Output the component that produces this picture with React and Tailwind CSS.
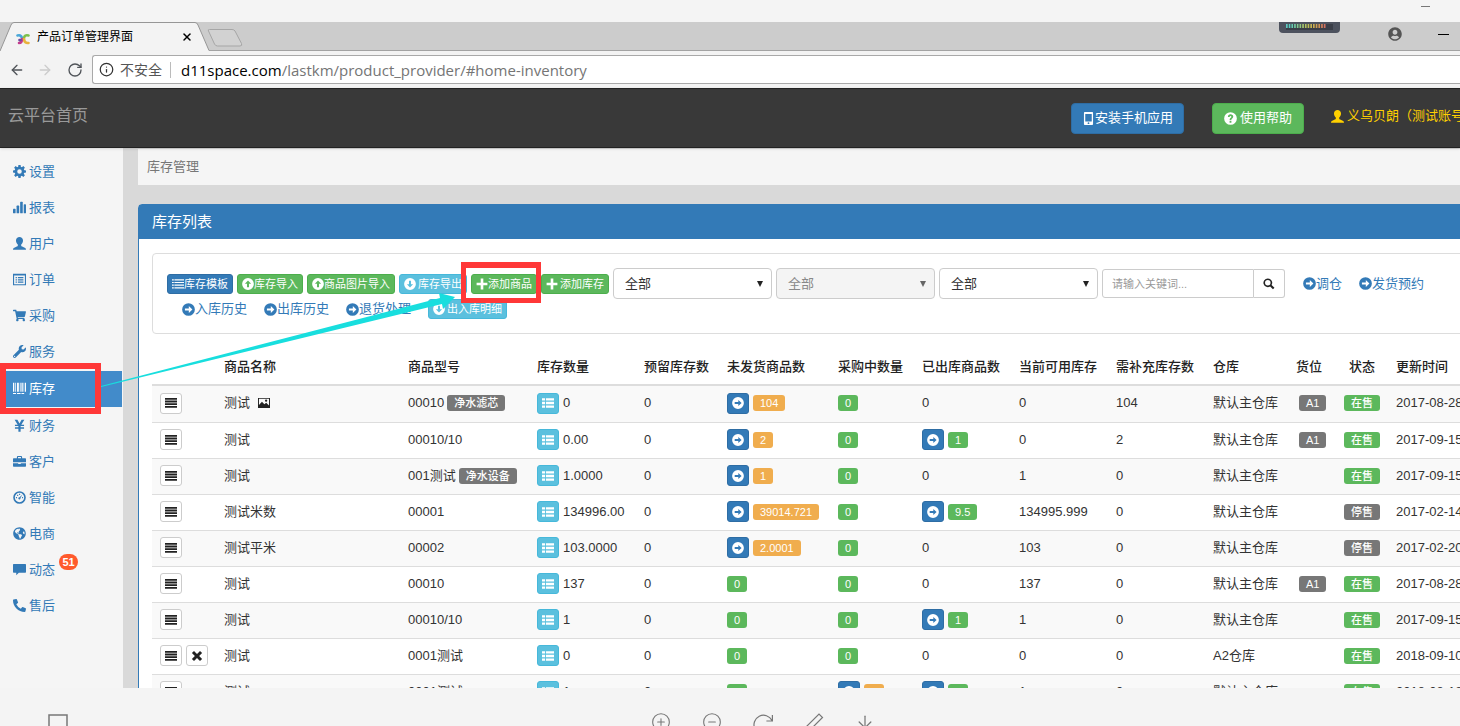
import { FaShoppingCart, FaWrench, FaGlobeAmericas, FaPhoneAlt, FaUserCircle } from "react-icons/fa";
import { ArrowLeft, ArrowRight, RotateCw, Info, X, CirclePlus, CircleMinus, ArrowDown } from "lucide-react";

function Glyph({ children, className = "size-[13px]" }) {
  return (
    <svg viewBox="0 0 20 20" fill="currentColor" aria-hidden="true" className={`shrink-0 ${className}`}>
      {children}
    </svg>
  );
}

const Cog = (p) => (
  <Glyph {...p}>
    <circle cx="10" cy="10" r="5.500" fill="none" stroke="currentColor" strokeWidth="4" />
    <path d="M8.300 0h3.400l.5 4H7.800zM8.300 20h3.400l.5-4H7.800zM0 8.300v3.400l4 .5V7.800zM20 8.300v3.400l-4 .5V7.800zM1.700 4.100l2.400-2.400 3.200 2.500-3.100 3.100zM18.300 4.100l-2.400-2.400-3.200 2.500 3.100 3.100zM1.700 15.900l2.400 2.400 3.200-2.500-3.100-3.100zM18.300 15.900l-2.400 2.400-3.200-2.500 3.100-3.100z" />
  </Glyph>
);
const Briefcase = (p) => (
  <Glyph {...p}><path fillRule="evenodd" d="M7.500 1.500h5c.9 0 1.500.6 1.500 1.500v2h5c.6 0 1 .4 1 1v5H0V6c0-.6.4-1 1-1h5V3c0-.9.6-1.500 1.500-1.500zM7.700 3.200V5h4.600V3.200zM0 12.500h8V14h4v-1.500h8V17c0 .6-.4 1-1 1H1c-.6 0-1-.4-1-1z" /></Glyph>
);
const Stats = (p) => (
  <Glyph {...p}><rect x="0" y="12" width="4" height="7" rx="1" /><rect x="5.5" y="7" width="4" height="12" rx="1" /><rect x="11" y="1" width="4" height="18" rx="1" /><rect x="16.5" y="5" width="3.5" height="14" rx="1" /></Glyph>
);
const User = (p) => (
  <Glyph {...p}><path d="M10 0C7 0 4.600 2 4.600 5.400c0 2.600 1.200 4.900 2.800 6.300v1.600c0 .8-.6 1.100-1.500 1.500L2 16.400C.7 17 0 17.600 0 19.500h20c0-1.900-.7-2.500-2-3.100l-3.900-1.600c-.9-.4-1.500-.7-1.500-1.500v-1.600c1.600-1.400 2.800-3.700 2.800-6.300C15.400 2 13 0 10 0z" /></Glyph>
);
const ListAlt = (p) => (
  <Glyph {...p}><path fillRule="evenodd" d="M0 1h20v18H0zM1.700 4v13.300h16.600V4z" /><path d="M4 6h2v2H4zM7.500 6H16v2H7.500zM4 9.500h2v2H4zM7.500 9.500H16v2H7.500zM4 13h2v2H4zM7.500 13H16v2H7.500z" /></Glyph>
);
const Barcode = (p) => (
  <Glyph {...p}><path d="M0 1h2v14H0zM3.500 1h1.200v14H3.500zM6.200 1h2.800v14H6.200zM10.500 1h1.200v14h-1.200zM13 1h2v14h-2zM16.300 1h.9v14h-.9zM18.300 1H20v14h-1.700zM0 17h4.700v1.500H0zM6.200 17h5.500v1.500H6.200zM13 17h4.200v1.500H13z" /></Glyph>
);
const Yen = (p) => (
  <Glyph {...p}><path d="M2.500 1h4.300L10 6.800 13.200 1h4.300l-4.700 7.700H17v2.200h-5.300v1.900H17V15h-5.300v4.500H8.300V15H3v-2.200h5.300v-1.900H3V8.700h4.200z" /></Glyph>
);
const Dashboard = (p) => (
  <Glyph {...p}><path fillRule="evenodd" d="M10 .3a9.700 9.700 0 1 0 0 19.400A9.700 9.700 0 0 0 10 .3zm0 2.500a7.200 7.200 0 1 1 0 14.400 7.200 7.200 0 0 1 0-14.400z" /><path d="M14.500 5.500l-3 5.300a1.700 1.700 0 1 1-1.300-1.200zM4.500 9.300h1.700V11H4.500zM6.300 5.800H8v1.700H6.300zM9.300 4.400H11V6H9.300zM13.900 9.300h1.600V11h-1.600z" /></Glyph>
);
const Comment = (p) => (
  <Glyph {...p}><path d="M1 1.500h18c.6 0 1 .4 1 1v11.500c0 .6-.4 1-1 1H9L5 19v-4H1c-.6 0-1-.4-1-1V2.500c0-.6.4-1 1-1z" /></Glyph>
);
const ThList = (p) => (
  <Glyph {...p}><path d="M0 2h5v4H0zM6.500 2H20v4H6.500zM0 8h5v4H0zM6.500 8H20v4H6.500zM0 14h5v4H0zM6.500 14H20v4H6.500z" /></Glyph>
);
const ListLines = (p) => (
  <Glyph {...p}><path d="M0 2h3v2H0zM4 2h16v2H4zM0 6.500h3v2H0zM4 6.500h16v2H4zM0 11h3v2H0zM4 11h16v2H4zM0 15.500h3v2H0zM4 15.500h16v2H4z" /></Glyph>
);
const Justify = (p) => (
  <Glyph {...p}><path d="M0 1.500h20v3H0zM0 6h20v3H0zM0 10.500h20v3H0zM0 15h20v3H0z" /></Glyph>
);
const circlePath = "M10 .2a9.800 9.800 0 1 0 0 19.600A9.800 9.800 0 0 0 10 .2z";
const CircleRight = (p) => (
  <Glyph {...p}><path fillRule="evenodd" d={`${circlePath}M10.500 4.800L16 10l-5.500 5.200v-3.500H4.500V8.300h6z`} /></Glyph>
);
const CircleUp = (p) => (
  <Glyph {...p}><path fillRule="evenodd" d={`${circlePath}M10 4l5.200 5.500h-3.500v6H8.300v-6H4.800z`} /></Glyph>
);
const CircleDown = (p) => (
  <Glyph {...p}><path fillRule="evenodd" d={`${circlePath}M10 16l5.200-5.500h-3.500v-6H8.300v6H4.800z`} /></Glyph>
);
const Plus = (p) => (
  <Glyph {...p}><path d="M7.800 1h4.400v6.800H19v4.400h-6.800V19H7.800v-6.800H1V7.800h6.800z" /></Glyph>
);
const Remove = (p) => (
  <Glyph {...p}><path d="M5 1.500l5 5 5-5L18.500 5l-5 5 5 5-3.500 3.500-5-5-5 5L1.500 15l5-5-5-5z" /></Glyph>
);
const Picture = (p) => (
  <Glyph {...p}><path fillRule="evenodd" d="M0 1.500h20v17H0zM1.600 3.100v10.400l5-5.500 4 4 3-2.500 4.800 4.500V3.100z" /><circle cx="13.500" cy="6.200" r="1.900" /></Glyph>
);
const Search = (p) => (
  <Glyph {...p}><path fillRule="evenodd" d="M8 .8a7.200 7.200 0 1 0 3.900 13.200l4.700 4.900 2.500-2.500-4.800-4.700A7.200 7.200 0 0 0 8 .8zm0 2.600a4.600 4.600 0 1 1 0 9.200 4.600 4.600 0 0 1 0-9.200z" /></Glyph>
);
const Phone = (p) => (
  <Glyph {...p}><path fillRule="evenodd" d="M4.500 0h11C16.300 0 17 .7 17 1.500v17c0 .8-.7 1.500-1.500 1.500h-11c-.8 0-1.500-.7-1.500-1.500v-17C3 .7 3.700 0 4.500 0zM5 3v11.500h10V3zm5 12.800a1.400 1.400 0 1 0 0 2.800 1.400 1.400 0 0 0 0-2.800z" /></Glyph>
);
const Question = (p) => (
  <Glyph {...p}><path fillRule="evenodd" d={`${circlePath}M8.600 14h2.800v2.500H8.600zM6 7.500C6 5 7.600 3.500 10.100 3.500c2.400 0 4.100 1.400 4.100 3.500 0 1.700-.9 2.500-1.900 3.200-.7.500-.9.800-.9 1.900v.5H8.700V12c0-1.700.8-2.400 1.700-3.100.7-.5.900-.9.900-1.600 0-.8-.5-1.300-1.300-1.300s-1.300.5-1.300 1.500z`} /></Glyph>
);

const menu = [
  ["设置", Cog],
  ["报表", Stats],
  ["用户", User],
  ["订单", ListAlt],
  ["采购", FaShoppingCart],
  ["服务", FaWrench],
  ["库存", Barcode],
  ["财务", Yen],
  ["客户", Briefcase],
  ["智能", Dashboard],
  ["电商", FaGlobeAmericas],
  ["动态", Comment],
  ["售后", FaPhoneAlt],
];

const headers = ["", "商品名称", "商品型号", "库存数量", "预留库存数", "未发货商品数", "采购中数量", "已出库商品数", "当前可用库存", "需补充库存数", "仓库", "货位", "状态", "更新时间"];

const rows = [
  { name: "测试", pic: true, model: "00010", tag: "净水滤芯", qty: "0", pend: "104", out: null, avail: "0", need: "104", slot: true, on: true, date: "2017-08-28" },
  { name: "测试", model: "00010/10", qty: "0.00", pend: "2", out: "1", avail: "0", need: "2", slot: true, on: true, date: "2017-09-15" },
  { name: "测试", model: "001测试", tag: "净水设备", qty: "1.0000", pend: "1", out: null, avail: "1", need: "0", on: true, date: "2017-09-15" },
  { name: "测试米数", model: "00001", qty: "134996.00", pend: "39014.721", out: "9.5", avail: "134995.999", need: "0", on: false, date: "2017-02-14" },
  { name: "测试平米", model: "00002", qty: "103.0000", pend: "2.0001", out: null, avail: "103", need: "0", on: false, date: "2017-02-20" },
  { name: "测试", model: "00010", qty: "137", pend: null, out: null, avail: "137", need: "0", slot: true, on: true, date: "2017-08-28" },
  { name: "测试", model: "00010/10", qty: "1", pend: null, out: "1", avail: "1", need: "0", on: true, date: "2017-09-15" },
  { name: "测试", del: true, model: "0001测试", qty: "0", pend: null, out: null, avail: "0", need: "0", wh: "A2仓库", on: true, date: "2018-09-10" },
  { name: "测试", model: "0001测试", qty: "1", pend: null, buying: "1", out: "0", avail: "1", need: "0", on: true, date: "2018-08-18" },
];

const tones = {
  green: "bg-[#5cb85c]",
  orange: "bg-[#f0ad4e]",
  gray: "bg-[#777]",
};

function Badge({ tone, children, className = "" }) {
  return (
    <span className={`inline-flex h-4 items-center rounded-[3px] px-[7px] text-[11px] leading-4 font-medium text-white ${tones[tone]} ${className}`}>
      {children}
    </span>
  );
}

const squares = {
  plain: "border-[#ccc] bg-white text-[#222]",
  blue: "border-[#2e6da4] bg-[#337ab7] text-white",
  cyan: "border-[#46b8da] bg-[#5bc0de] text-white",
};

function SquareButton({ tone, label, children }) {
  return (
    <button type="button" aria-label={label} className={`flex h-[21px] w-[22px] shrink-0 items-center justify-center rounded-[3px] border ${squares[tone]}`}>
      {children}
    </button>
  );
}

function Linked({ value, tone }) {
  return (
    <div className="flex items-center gap-1">
      <SquareButton tone="blue" label="查看"><CircleRight className="size-3" /></SquareButton>
      <Badge tone={tone}>{value}</Badge>
    </div>
  );
}

const fills = {
  blue: "border-[#2e6da4] bg-[#337ab7]",
  green: "border-[#4cae4c] bg-[#5cb85c]",
  cyan: "border-[#46b8da] bg-[#5bc0de]",
};

function ToolButton({ tone, icon: Icon, spaced, children }) {
  return (
    <button type="button" className={`flex h-5 shrink-0 items-center rounded-[3px] border px-1 text-[11px] whitespace-nowrap text-white ${fills[tone]} ${spaced ? "gap-[2px]" : ""}`}>
      <Icon className="size-3" />
      {children}
    </button>
  );
}

function ToolLink({ children }) {
  return (
    <a href="#home-inventory" className="flex shrink-0 items-center whitespace-nowrap text-[#337ab7]">
      <CircleRight />
      {children}
    </a>
  );
}

function Picker({ label, disabled }) {
  return (
    <div className="relative w-[159px] shrink-0">
      <select aria-label={label} disabled={disabled} className="block h-[31px] w-full appearance-none rounded-[4px] border border-[#ccc] bg-white px-[11px] text-[13px] text-[#333] disabled:bg-[#f4f4f4] disabled:text-[#888] disabled:opacity-100">
        <option>全部</option>
      </select>
      <span className={`pointer-events-none absolute top-[13px] right-[9px] border-x-[3px] border-t-[6px] border-x-transparent ${disabled ? "border-t-[#666]" : "border-t-[#222]"}`} />
    </div>
  );
}

const meter = ["#5fc9c0", "#5fc9c0", "#66c9b0", "#70c8a0", "#80c890", "#90c480", "#a4c470", "#b0c060", "#bcbc58", "#c4b454", "#c8ac54", "#cca054", "#d09458", "#d0805c", "#d07060"];

function BrowserChrome() {
  return (
    <>
      <div className="relative flex h-[29px] shrink-0 bg-[#ccc]">
        <svg className="absolute inset-0 h-full w-full" aria-hidden="true">
          <path d="M0 28.500H2000" stroke="#a3a3a3" fill="none" />
          <path d="M0 29L11 3Q12 .5 14 .5H195Q197 .5 198 3L209 28.500V30H0z" fill="#f3f3f3" />
          <path d="M0 29L11 3Q12 .5 14 .5H195Q197 .5 198 3L209 28.500" fill="none" stroke="#969696" />
          <path d="M208.500 9Q207.500 7.500 209.500 7.500H232Q234 7.500 235 9L241.500 21.500Q242.500 24 240 24H217.500Q215.500 24 214.500 22z" fill="#d2d2d2" stroke="#a6a6a6" />
        </svg>
        <div className="relative flex w-[199px] items-center pl-4 text-xs text-black">
          <svg viewBox="0 0 14 12" className="mt-1 h-3 w-[14px]" fill="none" strokeWidth="2.600" strokeLinecap="round" aria-hidden="true">
            <path d="M1.500 2.500Q5 1.500 6 5" stroke="#4aa7d8" /><path d="M6 6Q6 10 3 10" stroke="#c23c8c" />
            <path d="M12.500 2.500Q8.500 1.500 8 5" stroke="#7cc04b" /><path d="M8 6Q8.500 10.500 12.500 10" stroke="#e8b23c" /><path d="M3.500 7h1" stroke="#6a4aa0" />
          </svg>
          <span className="ml-[7px] whitespace-nowrap">产品订单管理界面</span>
          <button type="button" aria-label="关闭标签页" className="ml-auto"><X className="mr-1.5 size-3" strokeWidth={3} /></button>
        </div>
        <div className="relative ml-auto flex items-start pr-[11px]">
          <svg viewBox="0 0 61 11" className="mr-12 h-[11px] w-[61px]" aria-hidden="true">
            <path d="M0 0H61V7Q61 11 57 11H4Q0 11 0 7z" fill="#4d525e" />
            <path d="M7 2H54V8H7z" fill="#3a3e48" />
            {meter.map((color, i) => (
              <rect key={i} x={7 + i * 2.7} y="2" width="1.700" height="4" fill={color} />
            ))}
          </svg>
          <FaUserCircle className="mt-[5px] size-[14px] text-[#555]" />
          <span className="mt-3 ml-9 h-px w-[11px] bg-black" />
        </div>
      </div>
      <div className="flex h-[37px] shrink-0 items-center bg-[#f3f3f3] pl-[9px] text-[#505459]">
        <button type="button" aria-label="后退"><ArrowLeft className="size-4" /></button>
        <button type="button" aria-label="前进" className="ml-3 text-[#ccc]"><ArrowRight className="size-4" /></button>
        <button type="button" aria-label="刷新" className="ml-[14px]"><RotateCw className="size-4" /></button>
        <div className="ml-[9px] flex h-[29px] flex-1 items-center rounded-l-[3px] border border-r-0 border-[#a9a9a9] bg-white pl-1.5">
          <Info className="size-[15px] text-[#333]" />
          <span className="ml-1.5 text-sm text-[#555]">不安全</span>
          <span className="ml-2 h-4 w-px bg-[#bbb]" />
          <span className="ml-[10px] font-['Open_Sans'] text-[15px] leading-5 text-[#757575]"><span className="text-black">d11space.com</span>/lastkm/product_provider/#home-inventory</span>
        </div>
      </div>
    </>
  );
}

function Sidebar() {
  return (
    <nav className="w-[123px] shrink-0 bg-[#f5f5f5] pt-1.5">
      <ul>
        {menu.map(([label, Icon]) => {
          const active = label === "库存";
          return (
            <li key={label} className={active ? "relative my-px" : ""}>
              <a href="#home-inventory" className={`mr-px flex h-9 items-center pl-[13px] ${active ? "bg-[#428bca] text-white" : "text-[#337ab7]"}`}>
                <Icon className="mb-[2px] size-[13px] shrink-0" />
                <span className="ml-[3px]">{label}</span>
                {label === "动态" && <span className="mb-4 ml-1 flex h-4 w-[19px] items-center justify-center rounded-full bg-[#ff5a2c] text-[11px] font-bold text-white">51</span>}
              </a>
              {active && <span className="absolute -top-2 left-0 h-[51px] w-[101px] border-[6px] border-[#ff3838]" />}
            </li>
          );
        })}
      </ul>
    </nav>
  );
}

function Filters() {
  return (
    <div className="rounded-[4px] border border-[#ddd] p-[14px]">
      <div className="flex items-center gap-1">
        <ToolButton tone="blue" icon={ListLines}>库存模板</ToolButton>
        <ToolButton tone="green" icon={CircleUp}>库存导入</ToolButton>
        <ToolButton tone="green" icon={CircleUp}>商品图片导入</ToolButton>
        <ToolButton tone="cyan" icon={CircleDown} spaced>库存导出</ToolButton>
        <div className="relative">
          <ToolButton tone="green" icon={Plus}>添加商品</ToolButton>
          <span className="absolute -top-3 -left-[10px] z-20 h-[41px] w-20 border-[5px] border-t-[6px] border-[#ff3838]" />
        </div>
        <ToolButton tone="green" icon={Plus} spaced>添加库存</ToolButton>
        <Picker label="仓库" />
        <Picker label="货位" disabled />
        <Picker label="状态" />
        <div className="flex h-[29px] shrink-0">
          <input type="text" aria-label="关键词" placeholder="请输入关键词..." className="w-[152px] rounded-l-[3px] border border-[#ccc] px-[9px] text-[11px] placeholder:text-[#999]" />
          <button type="button" aria-label="搜索" className="flex w-[31px] items-center justify-center rounded-r-[3px] border border-l-0 border-[#ccc] text-[#222]"><Search className="size-3" /></button>
        </div>
        <div className="ml-[14px] flex gap-[17px]">
          <ToolLink>调仓</ToolLink>
          <ToolLink>发货预约</ToolLink>
        </div>
      </div>
      <div className="flex h-5 items-center gap-[17px] pl-[15px]">
        <ToolLink>入库历史</ToolLink>
        <ToolLink>出库历史</ToolLink>
        <ToolLink>退货处理</ToolLink>
        <ToolButton tone="cyan" icon={CircleDown} spaced>出入库明细</ToolButton>
      </div>
    </div>
  );
}

function Inventory() {
  return (
    <table className="mt-4 w-full table-fixed border-separate border-spacing-0 text-left whitespace-nowrap">
      <colgroup>
        <col className="w-16" /><col className="w-[184px]" /><col className="w-[129px]" /><col className="w-[107px]" /><col className="w-[83px]" />
        <col className="w-[111px]" /><col className="w-[84px]" /><col className="w-[97px]" /><col className="w-[97px]" /><col className="w-[97px]" />
        <col className="w-[83px]" /><col className="w-12" /><col className="w-[52px]" /><col />
      </colgroup>
      <thead>
        <tr>
          {headers.map((h, i) => (
            <th key={i} scope="col" className={`h-9 border-b-2 border-[#ddd] font-medium text-[#222] ${h === "状态" ? "text-center" : "pl-2"}`}>{h}</th>
          ))}
        </tr>
      </thead>
      <tbody className="[&_td]:h-9 [&_td]:border-t [&_td]:border-[#ddd] [&_td]:p-0 [&_td]:pb-[2px] [&_td]:pl-2 [&_tr:first-child_td]:border-t-0 [&_tr:nth-child(odd)]:bg-[#f9f9f9]">
        {rows.map((r, i) => (
          <tr key={i}>
            <td>
              <div className="flex gap-1">
                <SquareButton tone="plain" label="详情"><Justify className="size-3" /></SquareButton>
                {r.del && <SquareButton tone="plain" label="删除"><Remove className="size-3" /></SquareButton>}
              </div>
            </td>
            <td><div className="flex items-center gap-2">{r.name}{r.pic && <Picture className="size-3 text-[#222]" />}</div></td>
            <td><div className="flex items-center gap-[3px]">{r.model}{r.tag && <Badge tone="gray">{r.tag}</Badge>}</div></td>
            <td>
              <div className="flex items-center gap-1">
                <SquareButton tone="cyan" label="库存明细"><ThList className="size-3" /></SquareButton>
                {r.qty}
              </div>
            </td>
            <td>0</td>
            <td>{r.pend ? <Linked value={r.pend} tone="orange" /> : <Badge tone="green">0</Badge>}</td>
            <td>{r.buying ? <Linked value={r.buying} tone="orange" /> : <Badge tone="green">0</Badge>}</td>
            <td>{r.out ? <Linked value={r.out} tone="green" /> : "0"}</td>
            <td>{r.avail}</td>
            <td>{r.need}</td>
            <td>{r.wh || "默认主仓库"}</td>
            <td>{r.slot && <Badge tone="gray" className="ml-[3px]">A1</Badge>}</td>
            <td><Badge tone={r.on ? "green" : "gray"}>{r.on ? "在售" : "停售"}</Badge></td>
            <td>{r.date}</td>
          </tr>
        ))}
      </tbody>
    </table>
  );
}

export default function App() {
  return (
    <div className="relative flex h-screen flex-col overflow-hidden bg-[#f4f4f4] font-['Liberation_Sans','Noto_Sans_CJK_SC',sans-serif] text-[13px] leading-5 text-[#333]">
      <div className="flex h-[22px] shrink-0 justify-end pt-1.5 pr-[30px]">
        <span className="h-px w-[9px] bg-[#777]" />
      </div>
      <BrowserChrome />
      <header className="relative z-10 flex h-[60px] shrink-0 items-center border-y border-[#222] bg-[#393939] pl-2 shadow-sm">
        <a href="#home-inventory" className="mb-1 text-base text-[#999]">云平台首页</a>
        <div className="-mr-[17px] ml-auto flex shrink-0 items-center whitespace-nowrap">
          <button type="button" className="flex h-[31px] items-center rounded-[4px] border border-[#2e6da4] bg-[#337ab7] px-[10px] text-white"><Phone />安装手机应用</button>
          <button type="button" className="ml-7 flex h-[31px] items-center gap-[3px] rounded-[4px] border border-[#4cae4c] bg-[#5cb85c] px-[11px] text-white"><Question />使用帮助</button>
          <a href="#home-inventory" className="mb-1 ml-[27px] flex items-center gap-[3px] text-[#ffd000]"><User />义乌贝朗（测试账号）</a>
        </div>
      </header>
      <div className="flex min-h-0 flex-1 overflow-hidden bg-[#d9d9d9]">
        <Sidebar />
        <main className="ml-[15px] min-w-0 flex-1 overflow-hidden">
          <div className="min-w-[1420px]">
            <div className="mt-px h-9 bg-[#f5f5f5] px-[9px] leading-9 text-[#777]">库存管理</div>
            <section className="mt-[19px] rounded-t-[4px] border border-[#337ab7] bg-white">
              <h1 className="h-[34px] bg-[#337ab7] px-[13px] text-[15px] leading-[34px] text-white">库存列表</h1>
              <div className="px-[13px] pt-[14px] pb-4">
                <Filters />
                <Inventory />
              </div>
            </section>
          </div>
        </main>
      </div>
      <footer className="flex h-[38px] shrink-0 items-start overflow-hidden bg-[#f4f4f4] pt-6 pl-12 text-[#777]">
        <svg viewBox="0 0 20 16" className="mt-[2px] h-4 w-5 shrink-0" fill="none" stroke="#777" strokeWidth="1.500" aria-hidden="true"><rect x="1" y="1" width="18" height="13" /></svg>
        <div className="ml-[583px] flex gap-[31px]">
          <button type="button" aria-label="放大"><CirclePlus className="size-5" strokeWidth={1.3} /></button>
          <button type="button" aria-label="缩小"><CircleMinus className="size-5" strokeWidth={1.3} /></button>
          <button type="button" aria-label="旋转">
            <svg viewBox="0 0 20 20" className="size-5" fill="none" stroke="currentColor" strokeWidth="1.200" aria-hidden="true"><path d="M2 17A9 9 0 1 1 19 8.500M19.400 3v6h-6" /></svg>
          </button>
          <button type="button" aria-label="编辑">
            <svg viewBox="0 0 20 20" className="size-5" fill="none" stroke="currentColor" strokeWidth="1.200" aria-hidden="true"><path d="M2 15L15 2l3.500 3.500L5 19H2z" /></svg>
          </button>
          <button type="button" aria-label="下载"><ArrowDown className="size-5" strokeWidth={1.5} /></button>
        </div>
      </footer>
      <svg className="pointer-events-none absolute top-0 left-0 z-10 h-[420px] w-[480px]" aria-hidden="true">
        <path d="M101 386L440 298L439 293L455 297L443 309L442 304L101 387z" fill="#18dede" />
      </svg>
    </div>
  );
}
